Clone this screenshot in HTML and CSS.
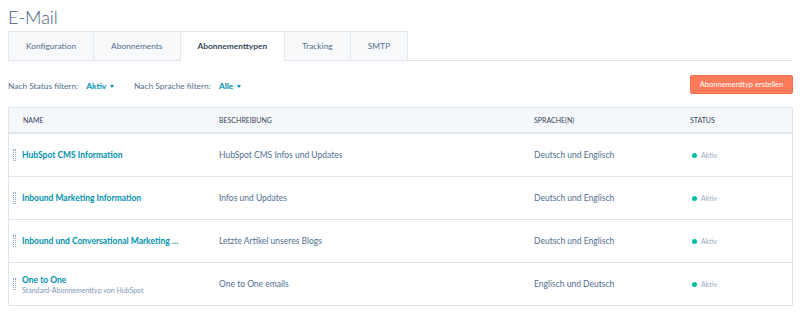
FILE: index.html
```html
<!DOCTYPE html>
<html lang="de">
<head>
  <meta charset="UTF-8">
  <meta name="viewport" content="width=device-width, initial-scale=1.0">
  <title>E-Mail Abonnementtypen</title>
  <link rel="stylesheet" href="styles.css">
</head>
<body>
  <h1 class="title">E-Mail</h1>

  <!-- Tabs -->
  <div class="tabs">
    <div class="tab">Konfiguration</div>
    <div class="tab">Abonnements</div>
    <div class="tab active">Abonnementtypen</div>
    <div class="tab">Tracking</div>
    <div class="tab">SMTP</div>
  </div>

  <!-- Filters and action -->
  <div class="toolbar">
    <div class="filters">
      <span class="filter-label">Nach Status filtern:</span>
      <span class="filter-value">Aktiv <span class="caret"></span></span>
      <span class="filter-label">Nach Sprache filtern:</span>
      <span class="filter-value">Alle <span class="caret"></span></span>
    </div>
    <button class="btn-create">Abonnementtyp erstellen</button>
  </div>

  <!-- Table -->
  <div class="table">
    <div class="row head">
      <div class="cell">NAME</div>
      <div class="cell">BESCHREIBUNG</div>
      <div class="cell">SPRACHE(N)</div>
      <div class="cell">STATUS</div>
    </div>
    <div class="row">
      <div class="cell name"><span class="handle"></span><div><a href="#">HubSpot CMS Information</a></div></div>
      <div class="cell">HubSpot CMS Infos und Updates</div>
      <div class="cell">Deutsch und Englisch</div>
      <div class="cell status"><span class="dot"></span>Aktiv</div>
    </div>
    <div class="row">
      <div class="cell name"><span class="handle"></span><div><a href="#">Inbound Marketing Information</a></div></div>
      <div class="cell">Infos und Updates</div>
      <div class="cell">Deutsch und Englisch</div>
      <div class="cell status"><span class="dot"></span>Aktiv</div>
    </div>
    <div class="row">
      <div class="cell name"><span class="handle"></span><div><a href="#">Inbound und Conversational Marketing …</a></div></div>
      <div class="cell">Letzte Artikel unseres Blogs</div>
      <div class="cell">Deutsch und Englisch</div>
      <div class="cell status"><span class="dot"></span>Aktiv</div>
    </div>
    <div class="row">
      <div class="cell name"><span class="handle"></span><div><a href="#">One to One</a><div class="sub">Standard-Abonnementtyp von HubSpot</div></div></div>
      <div class="cell">One to One emails</div>
      <div class="cell">Englisch und Deutsch</div>
      <div class="cell status"><span class="dot"></span>Aktiv</div>
    </div>
  </div>
</body>
</html>
```

FILE: styles.css
```css
body {
  margin: 0;
  padding: 6px 7px 0 8px;
  font-family: Lato, "Open Sans", sans-serif;
  color: #33475b;
  background: #fff;
}
.title {
  margin: 0;
  font-size: 18px;
  font-weight: 300;
  line-height: 22px;
  color: #425b76;
}
.tabs {
  display: flex;
  margin-top: 3px;
  border-bottom: 1px solid #dfe3eb;
  height: 29px;
}
.tab {
  padding: 0 17px;
  height: 28px;
  line-height: 28px;
  font-size: 8.4px;
  color: #516f90;
  background: #f7f9fb;
  border: 1px solid #e3e8ee;
  border-bottom: none;
  border-left: none;
  text-align: center;
}
.tab:first-child {
  border-left: 1px solid #e3e8ee;
}
.tab:last-child {
  min-width: 20px;
}
.tab.active {
  background: #fff;
  color: #33475b;
  font-weight: bold;
  height: 30px;
  position: relative;
  z-index: 1;
}
.toolbar {
  display: flex;
  justify-content: space-between;
  align-items: center;
  height: 45px;
  padding-top: 1px;
}
.filters {
  display: flex;
  align-items: center;
  font-size: 8.4px;
  padding-top: 3px;
}
.filter-label {
  color: #516f90;
  margin-right: 8px;
}
.filter-value {
  color: #0091ae;
  font-weight: bold;
  margin-right: 20px;
}
.caret {
  display: inline-block;
  margin-left: 2px;
  vertical-align: middle;
  border-left: 2.5px solid transparent;
  border-right: 2.5px solid transparent;
  border-top: 3px solid #0091ae;
}
.btn-create {
  width: 103px;
  height: 19px;
  padding: 0;
  border: 1px solid #f5704f;
  border-radius: 2px;
  background: #ff7a59;
  color: #fff;
  font-family: inherit;
  font-size: 7.5px;
}
.table {
  border: 1px solid #dfe3eb;
}
.row {
  display: grid;
  grid-template-columns: 196px 315px 156px 1fr;
  height: 42px;
  border-top: 1px solid #dfe3eb;
  font-size: 8.5px;
  color: #516f90;
}
.row.head {
  height: 24px;
  border-top: none;
  border-bottom: 1px solid #dfe3eb;
  background: #f5f8fa;
  font-size: 7px;
  color: #33475b;
}
.cell {
  display: flex;
  align-items: center;
  padding-left: 14px;
  white-space: nowrap;
}
.cell.name {
  padding-left: 4px;
}
.handle {
  width: 1px;
  height: 12px;
  margin-right: 6px;
  border-left: 1px dotted #8fa3bb;
  border-right: 1px dotted #8fa3bb;
}
.cell a {
  color: #0091ae;
  font-weight: bold;
  text-decoration: none;
}
.sub {
  font-size: 7px;
  color: #7c98b6;
  margin-top: 1px;
}
.status {
  font-size: 7px;
  color: #99acc2;
}
.dot {
  width: 5px;
  height: 5px;
  border-radius: 50%;
  background: #00bda5;
  margin-right: 4px;
  margin-left: 2px;
}
```
